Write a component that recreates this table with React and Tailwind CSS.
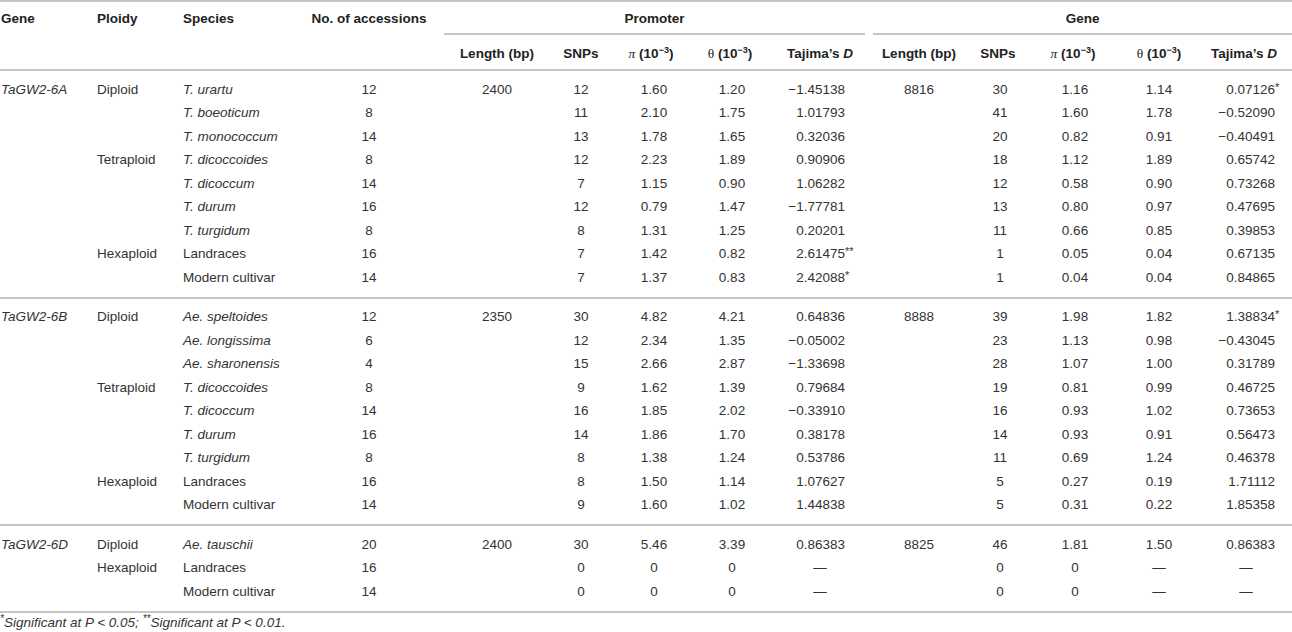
import React from 'react';

const groups = [
  {
    gene: 'TaGW2-6A',
    rows: [
      ['Diploid', 'T. urartu', true, '12', '2400', '12', '1.60', '1.20', '−1.45138', '8816', '30', '1.16', '1.14', '0.07126*'],
      ['', 'T. boeoticum', true, '8', '', '11', '2.10', '1.75', '1.01793', '', '41', '1.60', '1.78', '−0.52090'],
      ['', 'T. monococcum', true, '14', '', '13', '1.78', '1.65', '0.32036', '', '20', '0.82', '0.91', '−0.40491'],
      ['Tetraploid', 'T. dicoccoides', true, '8', '', '12', '2.23', '1.89', '0.90906', '', '18', '1.12', '1.89', '0.65742'],
      ['', 'T. dicoccum', true, '14', '', '7', '1.15', '0.90', '1.06282', '', '12', '0.58', '0.90', '0.73268'],
      ['', 'T. durum', true, '16', '', '12', '0.79', '1.47', '−1.77781', '', '13', '0.80', '0.97', '0.47695'],
      ['', 'T. turgidum', true, '8', '', '8', '1.31', '1.25', '0.20201', '', '11', '0.66', '0.85', '0.39853'],
      ['Hexaploid', 'Landraces', false, '16', '', '7', '1.42', '0.82', '2.61475**', '', '1', '0.05', '0.04', '0.67135'],
      ['', 'Modern cultivar', false, '14', '', '7', '1.37', '0.83', '2.42088*', '', '1', '0.04', '0.04', '0.84865'],
    ],
  },
  {
    gene: 'TaGW2-6B',
    rows: [
      ['Diploid', 'Ae. speltoides', true, '12', '2350', '30', '4.82', '4.21', '0.64836', '8888', '39', '1.98', '1.82', '1.38834*'],
      ['', 'Ae. longissima', true, '6', '', '12', '2.34', '1.35', '−0.05002', '', '23', '1.13', '0.98', '−0.43045'],
      ['', 'Ae. sharonensis', true, '4', '', '15', '2.66', '2.87', '−1.33698', '', '28', '1.07', '1.00', '0.31789'],
      ['Tetraploid', 'T. dicoccoides', true, '8', '', '9', '1.62', '1.39', '0.79684', '', '19', '0.81', '0.99', '0.46725'],
      ['', 'T. dicoccum', true, '14', '', '16', '1.85', '2.02', '−0.33910', '', '16', '0.93', '1.02', '0.73653'],
      ['', 'T. durum', true, '16', '', '14', '1.86', '1.70', '0.38178', '', '14', '0.93', '0.91', '0.56473'],
      ['', 'T. turgidum', true, '8', '', '8', '1.38', '1.24', '0.53786', '', '11', '0.69', '1.24', '0.46378'],
      ['Hexaploid', 'Landraces', false, '16', '', '8', '1.50', '1.14', '1.07627', '', '5', '0.27', '0.19', '1.71112'],
      ['', 'Modern cultivar', false, '14', '', '9', '1.60', '1.02', '1.44838', '', '5', '0.31', '0.22', '1.85358'],
    ],
  },
  {
    gene: 'TaGW2-6D',
    rows: [
      ['Diploid', 'Ae. tauschii', true, '20', '2400', '30', '5.46', '3.39', '0.86383', '8825', '46', '1.81', '1.50', '0.86383'],
      ['Hexaploid', 'Landraces', false, '16', '', '0', '0', '0', '—', '', '0', '0', '—', '—'],
      ['', 'Modern cultivar', false, '14', '', '0', '0', '0', '—', '', '0', '0', '—', '—'],
    ],
  },
];

function Tajima({ v, pad }) {
  if (v === '—') {
    return <td className={`text-center ${pad === 'p' ? 'pl-[6px]' : 'pr-[3px]'}`}>—</td>;
  }
  const num = v.replace(/\*+$/, '');
  const stars = v.slice(num.length);
  return (
    <td className={`text-right whitespace-nowrap ${pad === 'p' ? 'pr-[28px]' : 'pr-[17px]'}`}>
      {num}
      <span className="inline-block w-0 overflow-visible text-left align-top text-[11px] leading-[19px]">{stars}</span>
    </td>
  );
}

function Unit({ sym, serif }) {
  return (
    <>
      <span className={`font-['Liberation_Serif',serif] font-normal ${serif ? 'italic' : ''}`}>{sym}</span> (10
      <sup className="text-[9px]">−3</sup>)
    </>
  );
}

export default function App() {
  return (
    <div className="w-[1292px] bg-white font-['Liberation_Sans',Arial,sans-serif] text-[13.5px] text-[#333]">
      <div className="border-t-2 border-[#c6c6c6]">
        <table className="w-[1292px] table-fixed border-separate border-spacing-0">
          <colgroup>
            <col className="w-[96px]" />
            <col className="w-[87px]" />
            <col className="w-[120px]" />
            <col className="w-[132px]" />
            <col className="w-[124px]" />
            <col className="w-[44px]" />
            <col className="w-[96px]" />
            <col className="w-[62px]" />
            <col className="w-[112px]" />
            <col className="w-[92px]" />
            <col className="w-[66px]" />
            <col className="w-[84px]" />
            <col className="w-[88px]" />
            <col className="w-[89px]" />
          </colgroup>
          <thead className="font-bold text-[#222] leading-[15px]">
            <tr>
              <th className="text-left align-top pt-[9px] pl-px font-bold">Gene</th>
              <th className="text-left align-top pt-[9px] pl-px font-bold">Ploidy</th>
              <th className="text-left align-top pt-[9px] font-bold">Species</th>
              <th className="text-center align-top pt-[9px] font-bold">No. of accessions</th>
              <th colSpan={5} className="text-center align-top pt-[9px] font-bold">
                <div className="pl-[1px]">Promoter</div>
                <div className="mt-[7px] ml-[9px] mr-[8px] h-[1.5px] bg-[#c6c6c6]" />
              </th>
              <th colSpan={5} className="text-center align-top pt-[9px] font-bold">
                <div>Gene</div>
                <div className="mt-[7px] h-[1.5px] bg-[#c6c6c6]" />
              </th>
            </tr>
            <tr className="[&>th]:pt-[11px] [&>th]:pb-[8.5px] [&>th]:border-b-2 [&>th]:border-[#c6c6c6] [&>th]:font-bold [&>th]:whitespace-nowrap">
              <th />
              <th />
              <th />
              <th />
              <th className="text-center">Length (bp)</th>
              <th className="text-center">SNPs</th>
              <th className="text-center"><Unit sym="π" serif /></th>
              <th className="text-center"><Unit sym="θ" /></th>
              <th className="text-center pl-[6px]">Tajima’s <i>D</i></th>
              <th className="text-center">Length (bp)</th>
              <th className="text-center">SNPs</th>
              <th className="text-center"><Unit sym="π" serif /></th>
              <th className="text-center"><Unit sym="θ" /></th>
              <th className="text-center pr-[7px]">Tajima’s <i>D</i></th>
            </tr>
          </thead>
          {groups.map((g) => (
            <tbody key={g.gene} className="leading-[23.5px]">
              {g.rows.map((r, i) => {
                const first = i === 0;
                const last = i === g.rows.length - 1;
                const cls = `${first ? '[&>td]:pt-[6.5px]' : ''} ${last ? '[&>td]:pb-[7.5px] [&>td]:border-b-2 [&>td]:border-[#c6c6c6]' : ''}`;
                return (
                  <tr key={i} className={cls}>
                    <td className="pl-px italic whitespace-nowrap">{first ? g.gene : ''}</td>
                    <td className="pl-px">{r[0]}</td>
                    <td className={`whitespace-nowrap ${r[2] ? 'italic' : ''}`}>{r[1]}</td>
                    <td className="text-center">{r[3]}</td>
                    <td className="text-center">{r[4]}</td>
                    <td className="text-center">{r[5]}</td>
                    <td className="text-center pl-[6px]">{r[6]}</td>
                    <td className="text-center pl-[4px]">{r[7]}</td>
                    <Tajima v={r[8]} pad="p" />
                    <td className="text-center">{r[9]}</td>
                    <td className="text-center pl-[4px]">{r[10]}</td>
                    <td className="text-center pl-[4px]">{r[11]}</td>
                    <td className="text-center">{r[12]}</td>
                    <Tajima v={r[13]} pad="g" />
                  </tr>
                );
              })}
            </tbody>
          ))}
        </table>
      </div>
      <p className="mt-[2px] leading-[15px] italic text-[13.5px]">
        <sup className="text-[10px]">*</sup>Significant at P &lt; 0.05;{' '}
        <sup className="text-[10px]">**</sup>Significant at P &lt; 0.01.
      </p>
    </div>
  );
}
